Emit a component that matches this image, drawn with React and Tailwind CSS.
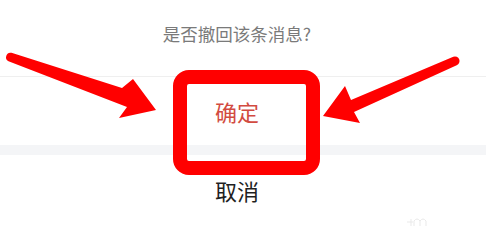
import React from "react";

export default function App() {
  return (
    <div
      className="relative w-[486px] h-[226px] overflow-hidden bg-white"
      style={{ fontFamily: '"Noto Sans CJK SC", "Noto Sans", sans-serif' }}
    >
      <div className="flex flex-col pr-[12px]">
        <div className="h-[76px] flex justify-center pt-[23px]">
          <span className="text-[17.5px] leading-[22px] text-[#7a7a7a]">是否撤回该条消息?</span>
        </div>
        <div className="h-px bg-[#efefef] -mr-[12px]" />
        <div className="h-[68px] flex items-center justify-center">
          <span className="text-[22px] leading-[26px] text-[#d24b41]">确定</span>
        </div>
        <div className="h-[10px] bg-[#f4f5f7] -mr-[12px]" />
        <div className="h-[70px] flex items-center justify-center">
          <span className="text-[22px] leading-[26px] text-[#1f1f1f]">取消</span>
        </div>
      </div>

      {/* annotation box */}
      <div className="absolute left-[173px] top-[70px] w-[147px] h-[105px] border-[14px] border-[#ff0000] rounded-[16px]" />

      {/* annotation arrows */}
      <svg className="absolute left-0 top-0" width="486" height="226" viewBox="0 0 486 226">
        <path
          d="M 11.5 52.8 L 122 88 L 133 79 L 156 110 L 119 118 L 127 107 L 8.5 61.2 A 4.5 4.5 0 0 1 11.5 52.8 Z"
          fill="#ff0000"
        />
        <path
          d="M 453.3 56.8 L 351 100 L 345 86 L 323 116 L 360 123 L 354 112 L 456.7 65.2 A 4.5 4.5 0 0 0 453.3 56.8 Z"
          fill="#ff0000"
        />
        <path
          d="M 407 222 L 413 222 M 411 219 L 411 226 M 414 226 L 414 221 Q 417 217 420 221 L 420 226 M 420 221 Q 423 217 426 221 L 426 226"
          stroke="#e9e9e9"
          strokeWidth="1"
          fill="none"
        />
      </svg>
    </div>
  );
}
